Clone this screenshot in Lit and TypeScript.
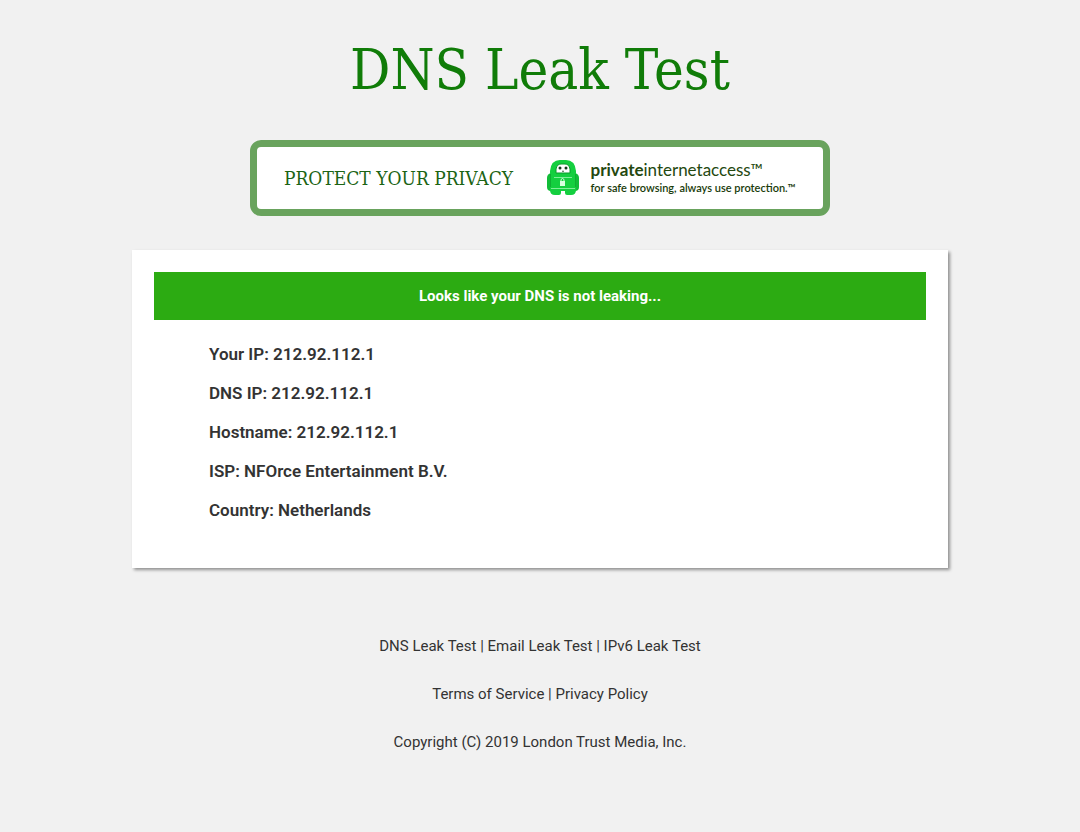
import { LitElement, html, css } from "lit";
import { customElement } from "lit/decorators.js";

const details = [
  ["Your IP", "212.92.112.1"],
  ["DNS IP", "212.92.112.1"],
  ["Hostname", "212.92.112.1"],
  ["ISP", "NFOrce Entertainment B.V."],
  ["Country", "Netherlands"],
];

@customElement("app-root")
export class AppRoot extends LitElement {
  static styles = css`
    :host {
      display: block;
      box-sizing: border-box;
      min-height: 100vh;
      padding: 32px 24px;
      background: #f1f1f1;
      color: #333;
      font-family: Roboto, "Liberation Sans", sans-serif;
    }
    a {
      color: inherit;
      text-decoration: none;
    }
    .title {
      margin: 0 0 32px;
      font: 400 56px/76px "DejaVu Serif Condensed", "DejaVu Serif", serif;
      text-align: center;
      color: #107c08;
    }
    .banner {
      display: flex;
      align-items: center;
      box-sizing: border-box;
      max-width: 580px;
      min-height: 76px;
      margin: 0 auto 34px;
      padding: 0 27px;
      border: 7px solid #69a35d;
      border-radius: 11px;
      background: #fff;
    }
    .slogan {
      flex: 1 1 auto;
      font: 400 19px/24px "DejaVu Serif Condensed", "DejaVu Serif", serif;
      color: #1c6414;
    }
    .robot {
      flex: none;
      width: 32px;
      height: 36px;
      margin-right: 12px;
    }
    .brand {
      display: flex;
      flex-direction: column;
      font-family: Lato, "Noto Sans", sans-serif;
      color: #24480f;
      white-space: nowrap;
    }
    .name {
      font-size: 17px;
      line-height: 18px;
    }
    .tagline {
      font-size: 11px;
      line-height: 17px;
      font-weight: 600;
      color: #193b0a;
    }
    .card {
      box-sizing: border-box;
      max-width: 816px;
      margin: 0 auto;
      padding: 22px 22px 38px;
      background: #fff;
      box-shadow: 2px 2px 3px rgba(0, 0, 0, 0.4);
    }
    .status {
      margin: 0;
      background: #2cab12;
      color: #fff;
      font-size: 15px;
      line-height: 48px;
      font-weight: 700;
      text-align: center;
    }
    .details {
      margin: 0;
      padding: 15px 55px 0;
      list-style: none;
      font-size: 17px;
      line-height: 39px;
      font-weight: 600;
    }
    .footer {
      margin-top: 54px;
      text-align: center;
      font-size: 15px;
      line-height: 48px;
    }
    .footer p {
      margin: 0;
    }
  `;

  render() {
    return html`
      <h1 class="title">DNS Leak Test</h1>
      <a class="banner" href="#">
        <span class="slogan">PROTECT YOUR PRIVACY</span>
        <svg class="robot" viewBox="0 0 32 36" aria-hidden="true">
          <path fill="#12bd38" d="M4 13h24q4 1 4 5v9q0 4-4 4H4q-4 0-4-4v-9q0-4 4-5z" />
          <path fill="#14cf3f" d="M3 30V11Q4 0 13 0h6q9 0 10 11v19q0 5-5 5h-4q-2 0-2-2v-2h-4v2q0 2-2 2H8q-5 0-5-5z" />
          <path fill="none" stroke="#0fae33" d="M3.500 14v13M28.500 14v13" />
          <path fill="none" stroke="#7fee98" d="M4 28.500h24M7 17.500h18" />
          <path fill="#fff" stroke="#0a9c2c" d="M9 13V9q1-5 5-5h4q4 0 5 5v4z" />
          <circle cx="13" cy="8" r="1.500" fill="#143b1b" />
          <circle cx="19" cy="8" r="1.500" fill="#143b1b" />
          <path fill="none" stroke="#143b1b" stroke-width=".8" d="M15 11q1 1 2 0" />
          <rect x="13" y="21" width="5" height="5" fill="#d8ffdf" />
          <path fill="none" stroke="#d8ffdf" d="M14 21v-1.500q1.500-2 3 0V21" />
        </svg>
        <span class="brand">
          <span class="name"><b>private</b>internetaccess™</span>
          <span class="tagline">for safe browsing, always use protection.™</span>
        </span>
      </a>
      <main class="card">
        <p class="status">Looks like your DNS is not leaking...</p>
        <ul class="details">
          ${details.map(([label, value]) => html`<li>${label}: ${value}</li>`)}
        </ul>
      </main>
      <footer class="footer">
        <p><a href="#">DNS Leak Test</a> | <a href="#">Email Leak Test</a> | <a href="#">IPv6 Leak Test</a></p>
        <p><a href="#">Terms of Service</a> | <a href="#">Privacy Policy</a></p>
        <p>Copyright (C) 2019 London Trust Media, Inc.</p>
      </footer>
    `;
  }
}
